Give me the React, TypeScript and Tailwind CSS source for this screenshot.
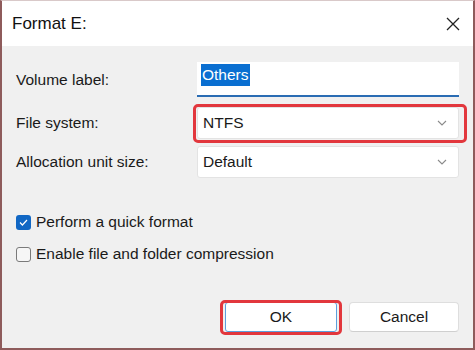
import React from "react";

const font = { fontFamily: '"Liberation Sans", Arial, sans-serif' };

function Chevron() {
  return (
    <svg width="10" height="6" viewBox="0 0 10 6" className="shrink-0">
      <polyline points="1,1 5,5 9,1" fill="none" stroke="#8a8a8a" strokeWidth="1.1" />
    </svg>
  );
}

export default function App() {
  return (
    <div
      className="w-[475px] h-[350px] flex flex-col bg-[#f0f0f0] border-l-2 border-r-2 border-b-2 border-t border-l-[#8e5b5b] border-r-[#8e5b5b] border-b-[#8e5b5b] border-t-[#d9c9c9] text-[#1a1a1a] overflow-hidden"
      style={font}
    >
      {/* Title bar */}
      <div className="h-[45px] bg-white flex items-center justify-between pl-[10px] pr-[13px] shrink-0">
        <span className="text-[17px] text-[#111]">Format E:</span>
        <svg width="14" height="14" viewBox="0 0 14 14">
          <path d="M1 1 L13 13 M13 1 L1 13" stroke="#222" strokeWidth="1.3" />
        </svg>
      </div>

      {/* Body */}
      <div className="flex-1 flex flex-col pl-[14px] pr-[14px] pt-[16px] text-[15.5px]">
        {/* Volume label */}
        <div className="flex items-center h-[35px]">
          <span className="w-[181px]">Volume label:</span>
          <div className="flex-1 h-[35px] bg-white border-b-2 border-b-[#2a6cb3] flex items-start pt-[2px] pl-[4px]">
            <span className="bg-[#0a6fd1] text-white px-[1px] leading-[22px]">Others</span>
          </div>
        </div>

        {/* File system */}
        <div className="flex items-center h-[32px] mt-[10px]">
          <span className="w-[181px]">File system:</span>
          <div className="relative flex-1 h-[32px]">
            <div className="h-full bg-white border border-[#e3e3e3] rounded-[3px] flex items-center justify-between pl-[5px] pr-[11px]">
              <span>NTFS</span>
              <Chevron />
            </div>
            <div className="absolute left-[-4px] right-[-8px] top-[-3px] bottom-[-4px] border-[3px] border-[#e2373d] rounded-[5px]" />
          </div>
        </div>

        {/* Allocation */}
        <div className="flex items-center h-[32px] mt-[7px]">
          <span className="w-[181px]">Allocation unit size:</span>
          <div className="flex-1 h-[32px] bg-white border border-[#e3e3e3] rounded-[3px] flex items-center justify-between pl-[5px] pr-[11px]">
            <span>Default</span>
            <Chevron />
          </div>
        </div>

        {/* Checkboxes */}
        <div className="flex items-center mt-[35px] h-[18px]">
          <div className="w-[15px] h-[15px] rounded-[3px] bg-[#1167c4] flex items-center justify-center">
            <svg width="9" height="7" viewBox="0 0 9 7">
              <polyline points="1,3.5 3.4,6 8,1" fill="none" stroke="white" strokeWidth="1.2" />
            </svg>
          </div>
          <span className="ml-[5px]">Perform a quick format</span>
        </div>
        <div className="flex items-center mt-[14px] h-[18px]">
          <div className="w-[15px] h-[15px] rounded-[3px] bg-[#f6f6f6] border border-[#7a7a7a]" />
          <span className="ml-[5px]">Enable file and folder compression</span>
        </div>

        {/* Buttons */}
        <div className="flex justify-end gap-[12px] mt-[39px] pr-[0px]">
          <div className="relative">
            <div className="w-[112px] h-[30px] bg-white border border-[#5d9fdc] rounded-[3px] flex items-center justify-center">
              OK
            </div>
            <div className="absolute left-[-5px] right-[-5px] top-[-2px] bottom-[-3px] border-[3px] border-[#e2373d] rounded-[5px]" />
          </div>
          <div className="w-[110px] h-[30px] bg-white border border-[#dedede] border-b-[#cfcfcf] rounded-[4px] flex items-center justify-center">
            Cancel
          </div>
        </div>
      </div>
    </div>
  );
}
